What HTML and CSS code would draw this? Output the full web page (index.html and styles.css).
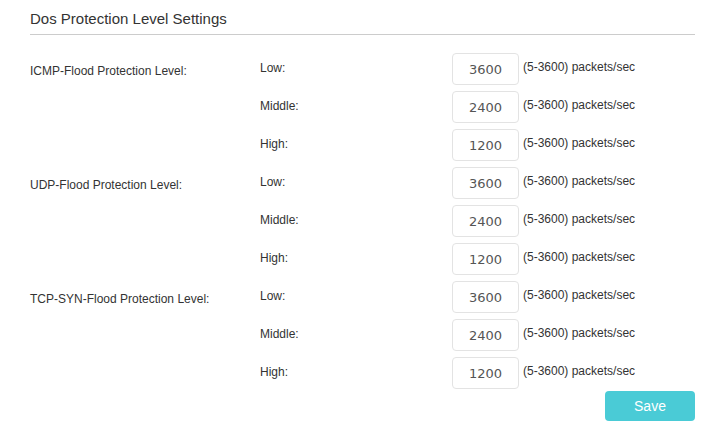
FILE: index.html
```html
<!DOCTYPE html>
<html lang="en">
<head>
<meta charset="utf-8">
<title>Dos Protection Level Settings</title>
<link rel="stylesheet" href="styles.css">
</head>
<body>
<main class="page">
  <h1 class="title">Dos Protection Level Settings</h1>
  <section class="groups">
    <div class="group">
      <div class="group-label">ICMP-Flood Protection Level:</div>
      <div class="levels">
        <div class="level-row"><span class="level-name">Low:</span><input class="level-input" type="text" value="3600"><span class="unit">(5-3600) packets/sec</span></div>
        <div class="level-row"><span class="level-name">Middle:</span><input class="level-input" type="text" value="2400"><span class="unit">(5-3600) packets/sec</span></div>
        <div class="level-row"><span class="level-name">High:</span><input class="level-input" type="text" value="1200"><span class="unit">(5-3600) packets/sec</span></div>
      </div>
    </div>
    <div class="group">
      <div class="group-label">UDP-Flood Protection Level:</div>
      <div class="levels">
        <div class="level-row"><span class="level-name">Low:</span><input class="level-input" type="text" value="3600"><span class="unit">(5-3600) packets/sec</span></div>
        <div class="level-row"><span class="level-name">Middle:</span><input class="level-input" type="text" value="2400"><span class="unit">(5-3600) packets/sec</span></div>
        <div class="level-row"><span class="level-name">High:</span><input class="level-input" type="text" value="1200"><span class="unit">(5-3600) packets/sec</span></div>
      </div>
    </div>
    <div class="group">
      <div class="group-label">TCP-SYN-Flood Protection Level:</div>
      <div class="levels">
        <div class="level-row"><span class="level-name">Low:</span><input class="level-input" type="text" value="3600"><span class="unit">(5-3600) packets/sec</span></div>
        <div class="level-row"><span class="level-name">Middle:</span><input class="level-input" type="text" value="2400"><span class="unit">(5-3600) packets/sec</span></div>
        <div class="level-row"><span class="level-name">High:</span><input class="level-input" type="text" value="1200"><span class="unit">(5-3600) packets/sec</span></div>
      </div>
    </div>
  </section>
  <div class="actions"><button class="save" type="button">Save</button></div>
</main>
</body>
</html>
```
FILE: styles.css
```css
html, body {
  margin: 0;
  padding: 0;
  background: #ffffff;
}
body {
  font-family: "Liberation Sans", Arial, sans-serif;
  color: #333333;
}
.page {
  padding: 10px 14px 0 30px;
}
.title {
  margin: 0;
  font-size: 15px;
  font-weight: normal;
  line-height: 18px;
  color: #333333;
  padding-bottom: 6px;
  border-bottom: 1px solid #cccccc;
}
.groups {
  margin-top: 18px;
  display: flex;
  flex-direction: column;
  gap: 6px;
}
.group {
  display: flex;
  align-items: flex-start;
}
.group-label {
  width: 230px;
  flex: none;
  font-size: 12px;
  line-height: 14px;
  padding-top: 11px;
}
.levels {
  display: flex;
  flex-direction: column;
  gap: 6px;
}
.level-row {
  display: flex;
  align-items: flex-start;
  height: 32px;
}
.level-name {
  width: 192px;
  flex: none;
  font-size: 12px;
  line-height: 14px;
  padding-top: 8px;
}
.level-input {
  box-sizing: border-box;
  width: 67px;
  height: 32px;
  margin: 0;
  padding: 0;
  border: 1px solid #e3e3e3;
  border-radius: 4px;
  text-align: center;
  font-family: "DejaVu Sans", Verdana, sans-serif;
  font-size: 13px;
  color: #555555;
  background: #ffffff;
  outline: none;
}
.unit {
  margin-left: 4px;
  font-size: 12px;
  line-height: 14px;
  padding-top: 7px;
  white-space: nowrap;
}
.actions {
  margin-top: 2px;
  display: flex;
  justify-content: flex-end;
}
.save {
  width: 90px;
  height: 30px;
  border: none;
  border-radius: 4px;
  background: #4acbd6;
  color: #ffffff;
  font-family: "Liberation Sans", Arial, sans-serif;
  font-size: 14px;
  line-height: 30px;
  padding: 0;
  cursor: pointer;
}
```
